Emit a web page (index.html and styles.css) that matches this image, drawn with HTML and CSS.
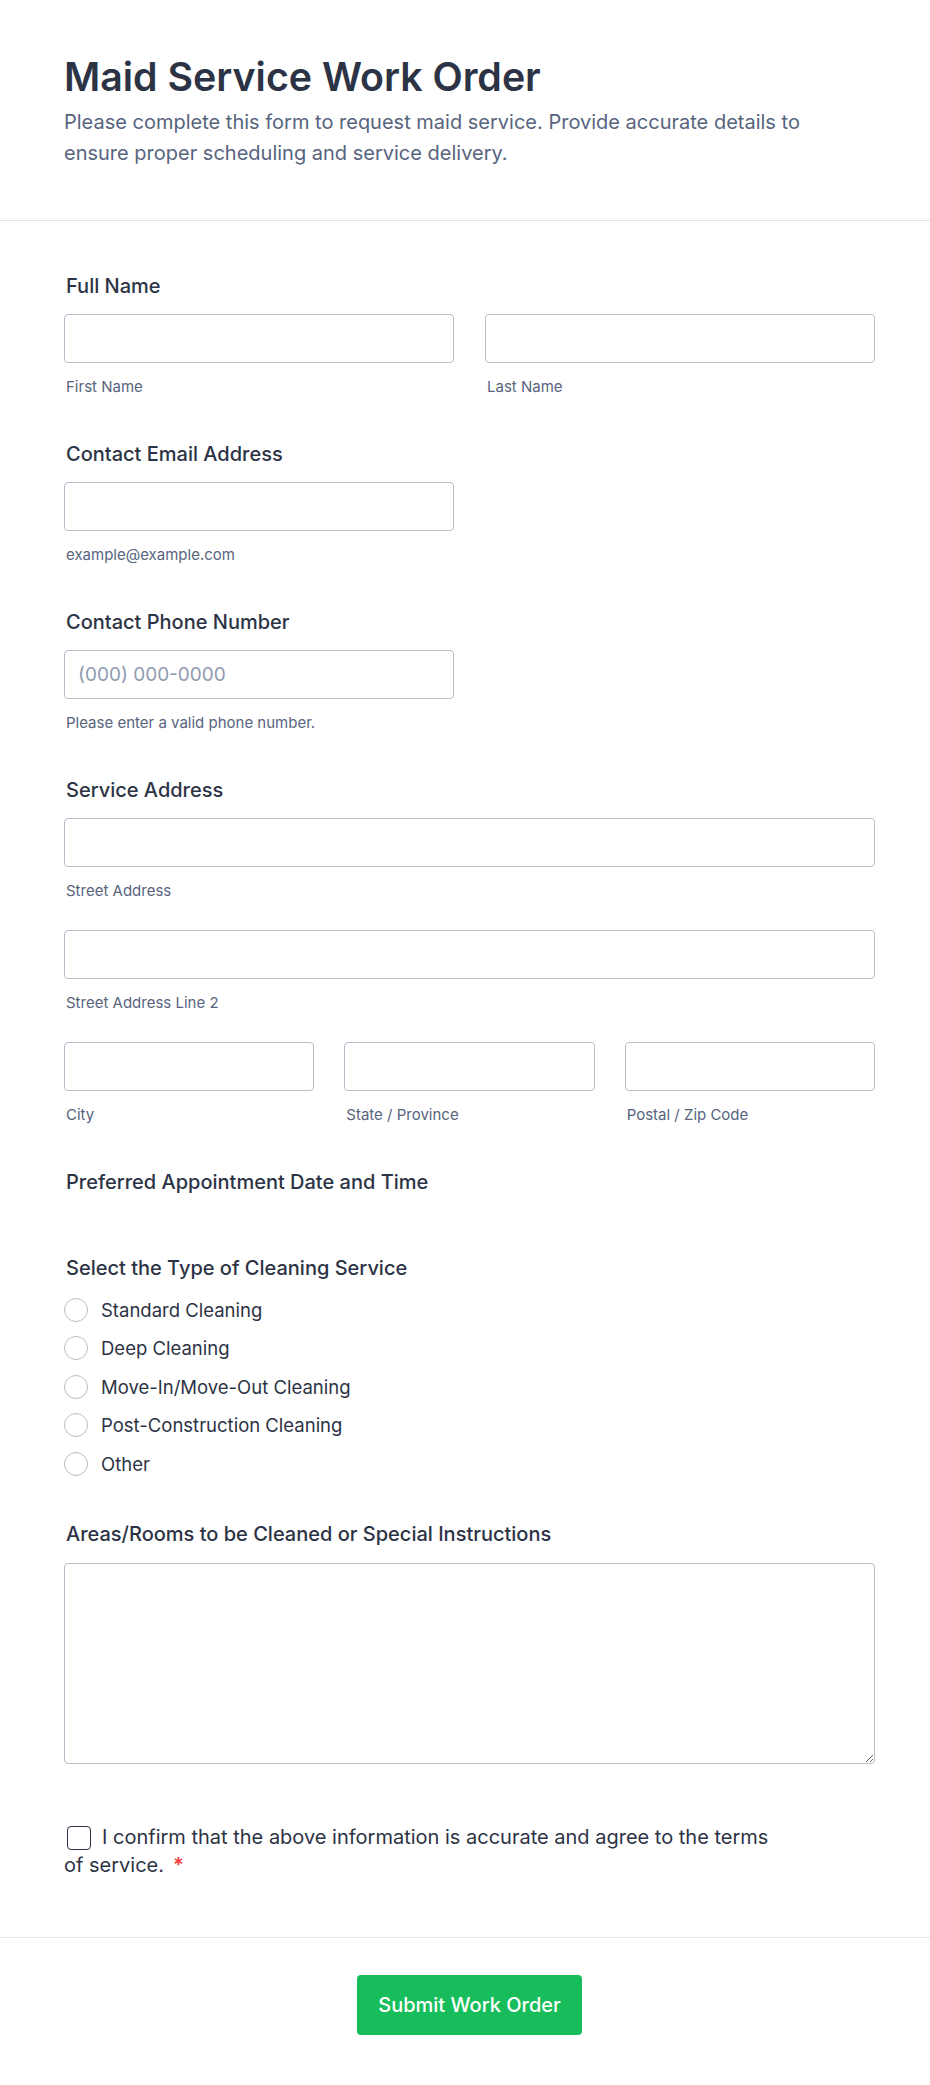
FILE: index.html
```html
<!DOCTYPE html>
<html lang="en">
<head>
<meta charset="utf-8">
<title>Maid Service Work Order</title>
<link rel="stylesheet" href="styles.css">
</head>
<body>
<header class="form-header">
  <h1 class="form-title">Maid Service Work Order</h1>
  <p class="form-desc">Please complete this form to request maid service. Provide accurate details to ensure proper scheduling and service delivery.</p>
</header>

<form class="form-body">
  <div class="field">
    <div class="label">Full Name</div>
    <div class="cols-2">
      <div>
        <input class="input" type="text">
        <div class="sublabel">First Name</div>
      </div>
      <div>
        <input class="input" type="text">
        <div class="sublabel">Last Name</div>
      </div>
    </div>
  </div>

  <div class="field">
    <div class="label">Contact Email Address</div>
    <div class="cols-2">
      <div>
        <input class="input" type="email">
        <div class="sublabel">example@example.com</div>
      </div>
    </div>
  </div>

  <div class="field">
    <div class="label">Contact Phone Number</div>
    <div class="cols-2">
      <div>
        <input class="input" type="tel" placeholder="(000) 000-0000">
        <div class="sublabel">Please enter a valid phone number.</div>
      </div>
    </div>
  </div>

  <div class="field">
    <div class="label">Service Address</div>
    <div class="addr-rows">
      <div>
        <input class="input" type="text">
        <div class="sublabel">Street Address</div>
      </div>
      <div>
        <input class="input" type="text">
        <div class="sublabel">Street Address Line 2</div>
      </div>
      <div class="cols-3">
        <div>
          <input class="input" type="text">
          <div class="sublabel">City</div>
        </div>
        <div>
          <input class="input" type="text">
          <div class="sublabel">State / Province</div>
        </div>
        <div>
          <input class="input" type="text">
          <div class="sublabel">Postal / Zip Code</div>
        </div>
      </div>
    </div>
  </div>

  <div class="field field-empty">
    <div class="label">Preferred Appointment Date and Time</div>
  </div>

  <div class="field">
    <div class="label">Select the Type of Cleaning Service</div>
    <div class="radio-list">
      <label class="radio-row"><span class="radio"></span>Standard Cleaning</label>
      <label class="radio-row"><span class="radio"></span>Deep Cleaning</label>
      <label class="radio-row"><span class="radio"></span>Move-In/Move-Out Cleaning</label>
      <label class="radio-row"><span class="radio"></span>Post-Construction Cleaning</label>
      <label class="radio-row"><span class="radio"></span>Other</label>
    </div>
  </div>

  <div class="field">
    <div class="label">Areas/Rooms to be Cleaned or Special Instructions</div>
    <textarea class="textarea"></textarea>
  </div>

  <div class="consent">
    <span class="checkbox"></span>I confirm that the above information is accurate and agree to the terms of service.<span class="req">*</span>
  </div>
</form>

<footer class="form-footer">
  <button class="submit" type="button">Submit Work Order</button>
</footer>
</body>
</html>
```

FILE: styles.css
```css
* { box-sizing: border-box; }

body {
  margin: 0;
  background: #ffffff;
  color: #2c3345;
  font-family: Inter, "Noto Sans", "Liberation Sans", sans-serif;
}

.form-header {
  padding: 53px 55px 51px 64px;
  border-bottom: 1px solid #e2e4ea;
}

.form-title {
  margin: 0 0 6px;
  font-size: 39.3px;
  line-height: 48px;
  font-weight: 600;
  color: #2c3345;
}

.form-desc {
  margin: 0;
  max-width: 790px;
  font-size: 20px;
  line-height: 31px;
  color: #57647e;
}

.form-body {
  padding: 52.5px 55px 57.5px 64px;
}

.field {
  margin-bottom: 44.5px;
}

.field-empty {
  padding-bottom: 1px;
}

.label {
  padding-left: 2px;
  font-size: 20px;
  line-height: 24px;
  font-weight: 500;
  color: #2c3345;
  margin-bottom: 16.5px;
}

.cols-2 {
  display: grid;
  grid-template-columns: 1fr 1fr;
  column-gap: 31px;
}

.cols-3 {
  display: grid;
  grid-template-columns: 1fr 1fr 1fr;
  column-gap: 30px;
}

.addr-rows {
  display: flex;
  flex-direction: column;
  gap: 29px;
}

.input {
  display: block;
  width: 100%;
  height: 49px;
  margin: 0;
  padding: 0 13px;
  border: 1px solid #b8bdc9;
  border-radius: 4px;
  background: #ffffff;
  font-family: inherit;
  font-size: 19px;
  color: #2c3345;
  outline: none;
}

.input::placeholder {
  color: #8f9bb0;
}

.sublabel {
  margin-top: 14px;
  padding-left: 2px;
  font-size: 15px;
  line-height: 20px;
  color: #57647e;
}

.radio-list {
  display: flex;
  flex-direction: column;
  gap: 10.4px;
  margin-bottom: 9px;
}

.radio-row {
  display: flex;
  align-items: center;
  height: 28px;
  font-size: 18.5px;
  line-height: 28px;
  color: #2c3345;
}

.radio {
  width: 24px;
  height: 24px;
  margin-right: 13px;
  border: 1px solid #b8bdc9;
  border-radius: 50%;
  background: #ffffff;
  flex: none;
}

.textarea {
  display: block;
  width: 100%;
  height: 201px;
  margin: 0;
  padding: 10px 13px;
  border: 1px solid #b8bdc9;
  border-radius: 4px;
  background: #ffffff;
  font-family: inherit;
  font-size: 18px;
  color: #2c3345;
  resize: vertical;
  outline: none;
}

.consent {
  max-width: 712px;
  padding-top: 15px;
  font-size: 20px;
  line-height: 28px;
  color: #2c3345;
}

.checkbox {
  display: inline-block;
  width: 24px;
  height: 24px;
  margin: 0 11px 0 3px;
  border: 1.5px solid #2c3345;
  border-radius: 4px;
  vertical-align: middle;
  position: relative;
  top: -1px;
}

.req {
  margin-left: 9px;
  color: #f23a3c;
  font-weight: 600;
}

.form-footer {
  border-top: 1px solid #e6e8ee;
  padding: 37px 55px 49px 64px;
  display: flex;
  justify-content: center;
}

.submit {
  height: 60px;
  padding: 0 21px;
  border: none;
  border-radius: 4px;
  background: #18bd5b;
  color: #ffffff;
  font-family: inherit;
  font-size: 20px;
  font-weight: 500;
  cursor: pointer;
}
```
